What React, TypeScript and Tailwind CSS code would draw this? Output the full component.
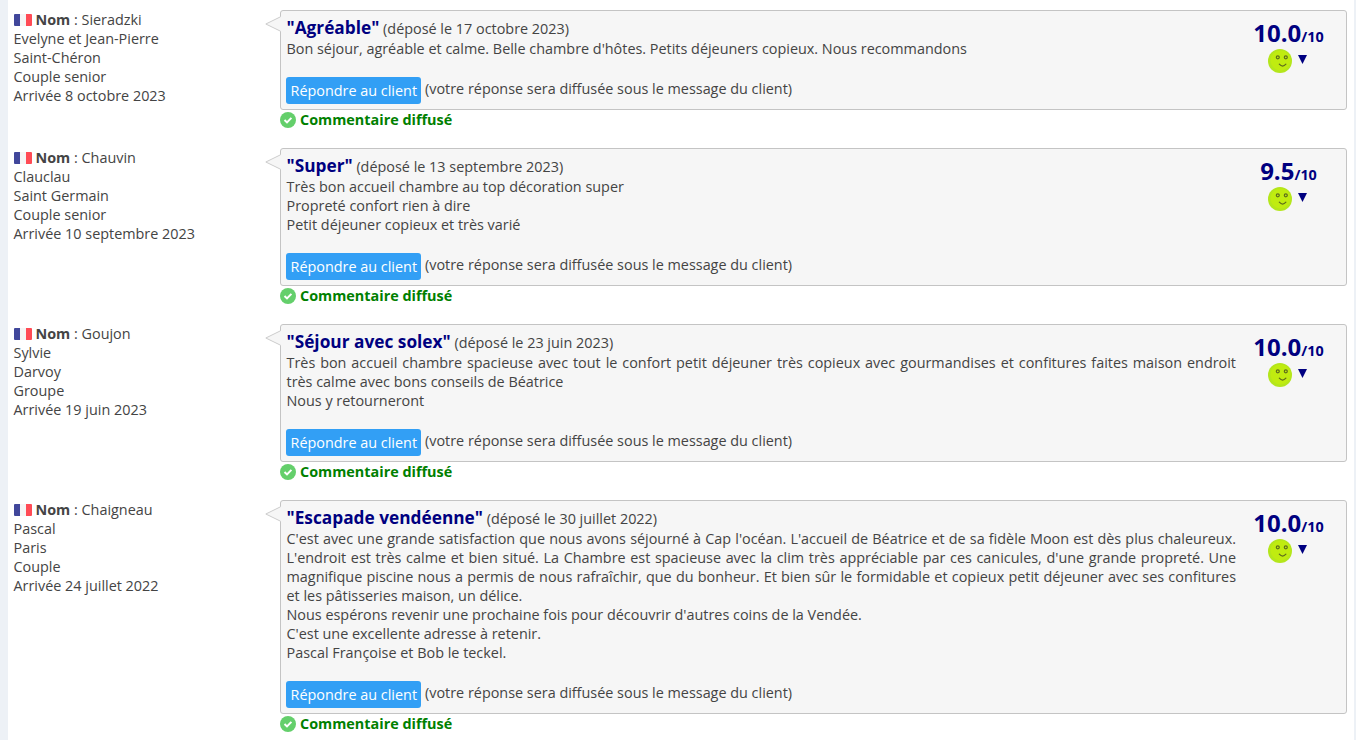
import clsx from "clsx";

type Review = {
  name: string;
  firstName: string;
  city: string;
  group: string;
  arrival: string;
  title: string;
  date: string;
  lines: string[];
  score: string;
};

const reviews: Review[] = [
  {
    name: "Sieradzki",
    firstName: "Evelyne et Jean-Pierre",
    city: "Saint-Chéron",
    group: "Couple senior",
    arrival: "8 octobre 2023",
    title: "Agréable",
    date: "17 octobre 2023",
    lines: ["Bon séjour, agréable et calme. Belle chambre d'hôtes. Petits déjeuners copieux. Nous recommandons"],
    score: "10.0",
  },
  {
    name: "Chauvin",
    firstName: "Clauclau",
    city: "Saint Germain",
    group: "Couple senior",
    arrival: "10 septembre 2023",
    title: "Super",
    date: "13 septembre 2023",
    lines: [
      "Très bon accueil chambre au top décoration super",
      "Propreté confort rien à dire",
      "Petit déjeuner copieux et très varié",
    ],
    score: "9.5",
  },
  {
    name: "Goujon",
    firstName: "Sylvie",
    city: "Darvoy",
    group: "Groupe",
    arrival: "19 juin 2023",
    title: "Séjour avec solex",
    date: "23 juin 2023",
    lines: [
      "Très bon accueil chambre spacieuse avec tout le confort petit déjeuner très copieux avec gourmandises et confitures faites maison endroit très calme avec bons conseils de Béatrice",
      "Nous y retourneront",
    ],
    score: "10.0",
  },
  {
    name: "Chaigneau",
    firstName: "Pascal",
    city: "Paris",
    group: "Couple",
    arrival: "24 juillet 2022",
    title: "Escapade vendéenne",
    date: "30 juillet 2022",
    lines: [
      "C'est avec une grande satisfaction que nous avons séjourné à Cap l'océan. L'accueil de Béatrice et de sa fidèle Moon est dès plus chaleureux. L'endroit est très calme et bien situé. La Chambre est spacieuse avec la clim très appréciable par ces canicules, d'une grande propreté. Une magnifique piscine nous a permis de nous rafraîchir, que du bonheur. Et bien sûr le formidable et copieux petit déjeuner avec ses confitures et les pâtisseries maison, un délice.",
      "Nous espérons revenir une prochaine fois pour découvrir d'autres coins de la Vendée.",
      "C'est une excellente adresse à retenir.",
      "Pascal Françoise et Bob le teckel.",
    ],
    score: "10.0",
  },
];

const Flag = () => (
  <svg viewBox="0 0 18 12" className="mr-1 h-3 w-[18px] shrink-0">
    <path d="M1 0h5v12H1a1 1 0 0 1-1-1V1a1 1 0 0 1 1-1z" fill="#41479b" />
    <path d="M6 0h6v12H6z" fill="#f5f5f5" />
    <path d="M12 0h5a1 1 0 0 1 1 1v10a1 1 0 0 1-1 1h-5z" fill="#ff4b55" />
  </svg>
);

const Smiley = () => (
  <svg viewBox="0 0 24 24" className="h-6 w-6">
    <circle cx="12" cy="12" r="12" fill="#b4e61c" />
    <circle cx="12.5" cy="11.5" r="10" fill="#c0ec10" />
    <g fill="none" stroke="#5d6b1c">
      <circle cx="9.8" cy="8.3" r="1.5" strokeWidth="1.2" />
      <circle cx="17.8" cy="8.3" r="1.5" strokeWidth="1.2" />
      <path d="M11.3 15.2q3.3 3.8 6.6 0" strokeWidth="1.2" strokeLinecap="round" />
    </g>
  </svg>
);

const CheckBadge = () => (
  <svg viewBox="0 0 16 16" className="h-4 w-4 shrink-0">
    <circle cx="8" cy="8" r="8" fill="#64cf6b" />
    <path d="M4.5 8l2.5 2.4 4.4-4.5" fill="none" stroke="#fff" strokeWidth="2" />
  </svg>
);

const Guest = ({ review }: { review: Review }) => (
  <div className="w-[266.5px] shrink-0">
    <div className="flex items-center">
      <Flag />
      <p>
        <b>Nom</b> : {review.name}
      </p>
    </div>
    <p>{review.firstName}</p>
    <p>{review.city}</p>
    <p>{review.group}</p>
    <p>Arrivée {review.arrival}</p>
  </div>
);

const Score = ({ value }: { value: string }) => (
  <div className="flex w-[105px] shrink-0 flex-col items-center pt-[5px] text-[#000080]">
    <p className="h-[34px] text-2xl leading-[34px] font-bold">
      {value}
      <span className="text-[14.4px]">/10</span>
    </p>
    <div className="-mt-1 flex items-start gap-1.5 pr-[3px]">
      <div className="pt-[3px]">
        <Smiley />
      </div>
      <svg viewBox="0 0 9 9" className="mt-[9px] h-[9px] w-[9px]">
        <path d="M0 0h9L4.5 9z" fill="currentColor" />
      </svg>
    </div>
  </div>
);

const ReviewRow = ({ review, last }: { review: Review; last: boolean }) => (
  <section className={clsx("flex", { "mb-[19px]": !last })}>
    <Guest review={review} />
    <div className="min-w-0 flex-1">
      <div className="relative flex rounded-[3px] border border-[#c4c4c4] bg-[#f6f6f6] pb-[5px] pl-[5.5px]">
        <svg viewBox="0 0 16 16" className="absolute top-[5px] -left-4 h-4 w-4">
          <path d="M16 0.5L0.5 8l15.5 7.5z" fill="#f6f6f6" />
          <path d="M15.5 0.8L0.8 8l14.7 7.2" fill="none" stroke="#ccc" />
        </svg>
        <div className="w-[949.5px] shrink-0 text-justify">
          <p className="h-7 pt-1 leading-[25px]">
            <b className="text-[17.28px] text-[#000080]">"{review.title}"</b> (déposé le {review.date})
          </p>
          {review.lines.map((line) => (
            <p key={line}>{line}</p>
          ))}
          <div className="mt-[19px] flex">
            <button className="-ml-[0.5px] h-[27px] rounded-[3px] bg-[#329ff5] pr-1 pl-[4.5px] text-white">
              Répondre au client
            </button>
            <span className="ml-1 pt-0.5">(votre réponse sera diffusée sous le message du client)</span>
          </div>
        </div>
        <Score value={review.score} />
      </div>
      <div className="flex items-center gap-1 font-bold text-[#008000]">
        <CheckBadge />
        Commentaire diffusé
      </div>
    </div>
  </section>
);

const App = () => (
  <div className="h-[740px] overflow-hidden bg-[#edf1f6] pr-0.5 pl-2 font-['Open_Sans',sans-serif] text-[14.4px] leading-[19px] text-[#444]">
    <main className="h-full bg-white pt-2.5 pr-[7px] pl-[5.5px]">
      {reviews.map((review, index) => (
        <ReviewRow key={review.name} review={review} last={index === reviews.length - 1} />
      ))}
    </main>
  </div>
);

export default App;
